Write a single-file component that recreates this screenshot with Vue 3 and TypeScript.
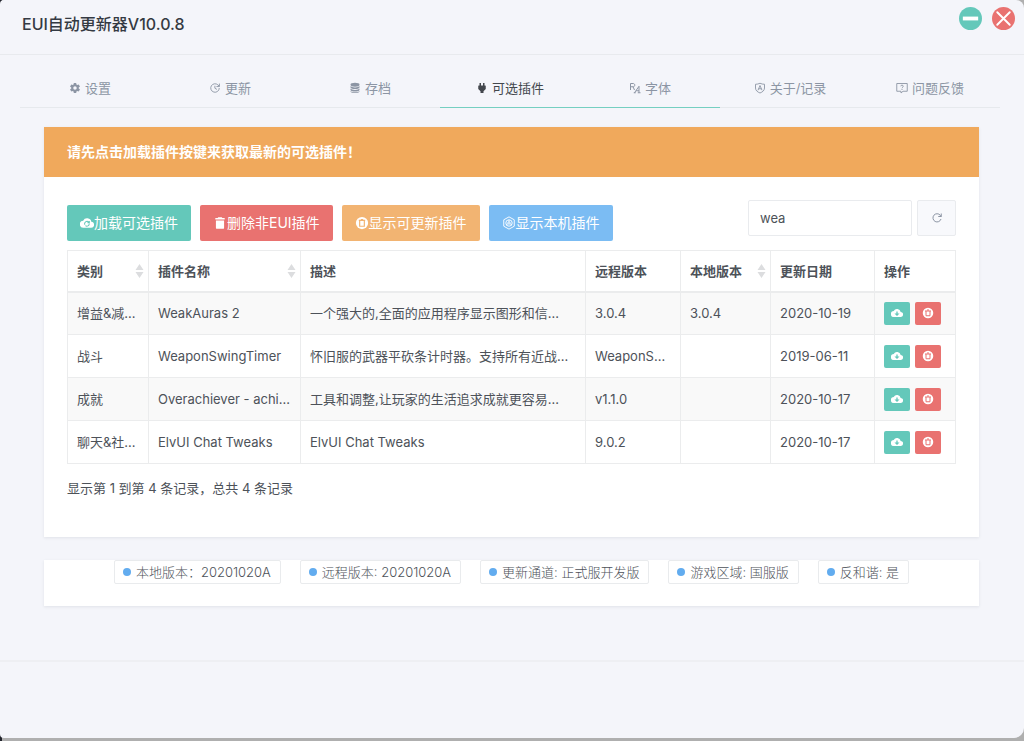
<script setup lang="ts">
import { ref } from 'vue'

interface Tab {
  icon: string
  label: string
}

interface Plugin {
  category: string
  name: string
  description: string
  remote: string
  local: string
  updated: string
}

const tabs: Tab[] = [
  { icon: 'gear', label: '设置' },
  { icon: 'update', label: '更新' },
  { icon: 'database', label: '存档' },
  { icon: 'plug', label: '可选插件' },
  { icon: 'font', label: '字体' },
  { icon: 'shield', label: '关于/记录' },
  { icon: 'question', label: '问题反馈' },
]
const activeTab = ref(3)
const hoverTab = ref(4)

const columns = [
  { label: '类别', key: 'category', sortable: true },
  { label: '插件名称', key: 'name', sortable: true },
  { label: '描述', key: 'description', sortable: false },
  { label: '远程版本', key: 'remote', sortable: false },
  { label: '本地版本', key: 'local', sortable: true },
  { label: '更新日期', key: 'updated', sortable: false },
  { label: '操作', key: 'actions', sortable: false },
]

const plugins: Plugin[] = [
  { category: '增益&减...', name: 'WeakAuras 2', description: '一个强大的,全面的应用程序显示图形和信...', remote: '3.0.4', local: '3.0.4', updated: '2020-10-19' },
  { category: '战斗', name: 'WeaponSwingTimer', description: '怀旧服的武器平砍条计时器。支持所有近战...', remote: 'WeaponS...', local: '', updated: '2019-06-11' },
  { category: '成就', name: 'Overachiever - achi...', description: '工具和调整,让玩家的生活追求成就更容易...', remote: 'v1.1.0', local: '', updated: '2020-10-17' },
  { category: '聊天&社...', name: 'ElvUI Chat Tweaks', description: 'ElvUI Chat Tweaks', remote: '9.0.2', local: '', updated: '2020-10-17' },
]

const statuses = ['本地版本：20201020A', '远程版本: 20201020A', '更新通道: 正式服开发版', '游戏区域: 国服版', '反和谐: 是']
const keyword = ref('wea')
</script>

<template>
  <div class="desktop">
    <div class="window">
      <header class="titlebar">
        <h1>EUI自动更新器V10.0.8</h1>
        <div class="controls">
          <button type="button" class="round teal" aria-label="最小化">
            <svg viewBox="0 0 24 24"><path d="M4 12H20" stroke="#fff" stroke-width="4" /></svg>
          </button>
          <button type="button" class="round red" aria-label="关闭">
            <svg viewBox="0 0 24 24"><path d="M5.500 5.500l13 13M18.500 5.500l-13 13" stroke="#fff" stroke-width="2" stroke-linecap="round" /></svg>
          </button>
        </div>
      </header>

      <nav class="tabs">
        <a
          v-for="(tab, i) in tabs"
          :key="tab.label"
          href="#"
          :class="{ active: i === activeTab, lined: i === activeTab || i === hoverTab }"
          @click.prevent="activeTab = i"
        >
          <svg v-if="tab.icon === 'gear'" viewBox="0 0 24 24" fill="currentColor"><path d="M12 15.500A3.500 3.500 0 0 1 8.500 12 3.500 3.500 0 0 1 12 8.500a3.500 3.500 0 0 1 3.500 3.500 3.500 3.500 0 0 1-3.500 3.500m7.430-2.530c.04-.32.07-.64.07-.97 0-.33-.03-.66-.07-1l2.110-1.630c.19-.15.24-.42.12-.64l-2-3.460c-.12-.22-.39-.31-.61-.22l-2.490 1c-.52-.39-1.060-.73-1.690-.98l-.37-2.650A.506.506 0 0 0 14 2h-4c-.25 0-.46.18-.5.42l-.37 2.650c-.63.25-1.170.59-1.690.98l-2.490-1c-.22-.09-.49 0-.61.22l-2 3.460c-.13.22-.07.49.12.64L4.570 11c-.04.34-.07.67-.07 1 0 .33.03.65.07.97l-2.110 1.660c-.19.15-.25.42-.12.64l2 3.460c.12.22.39.3.61.22l2.490-1.010c.52.4 1.060.74 1.690.99l.37 2.650c.04.24.25.42.5.42h4c.25 0 .46-.18.5-.42l.37-2.650c.63-.26 1.170-.59 1.690-.99l2.490 1.010c.22.08.49 0 .61-.22l2-3.460c.12-.22.07-.49-.12-.64z" /></svg>
          <svg v-else-if="tab.icon === 'update'" viewBox="0 0 24 24" fill="none" stroke="currentColor" stroke-width="1.800"><path d="M20.500 12a8.500 8.500 0 1 1-2.600-6.100L20.500 8.500M20.800 3.200v5.900h-5.900M11.800 7.500v5l4 2.300" /></svg>
          <svg v-else-if="tab.icon === 'database'" viewBox="0 0 24 24" fill="currentColor"><ellipse cx="12" cy="5.500" rx="9" ry="3.800" /><path d="M3 8.200c1.500 3.600 16.500 3.600 18 0v3c-1.500 4-16.500 4-18 0zM3 13.200c1.500 3.600 16.500 3.600 18 0v2.800c-1.500 4-16.500 4-18 0zM3 18c1.500 3.600 16.500 3.600 18 0v1c-1.500 4.300-16.500 4.300-18 0z" /></svg>
          <svg v-else-if="tab.icon === 'plug'" viewBox="0 0 24 24" fill="currentColor"><path d="M7 2h3v5h4V2h3v5h1.500a1 1 0 0 1 1 1v6L15 18.500V22H9v-3.500L4.500 14V8a1 1 0 0 1 1-1H7z" /></svg>
          <svg v-else-if="tab.icon === 'font'" viewBox="0 0 24 24" fill="none" stroke="currentColor" stroke-width="2"><path d="M3 16V3h5.500c4 0 4 6.500 0 6.500H3M8 9.500l3 6.500M11 21.500l9-13v13M14 17.500h6M9.500 21.500h4M17.500 21.500H23" /></svg>
          <svg v-else-if="tab.icon === 'shield'" viewBox="0 0 24 24" fill="none" stroke="currentColor" stroke-width="1.800"><path d="M12 2.500c3 1.500 6 2 9 2v7.500c0 5-4 8-9 10-5-2-9-5-9-10V4.500c3 0 6-.5 9-2zM8 16.500l4-9.500 4 9.500M9.300 13.500h5.400" /></svg>
          <svg v-else viewBox="0 0 24 24" fill="none" stroke="currentColor" stroke-width="1.800"><path d="M1.500 3h21v15.500H14L10 22v-3.500H1.500zM9.500 8.500c0-3 5-3 5 0 0 2-2.500 2-2.500 4M12 14v2" /></svg>
          <span>{{ tab.label }}</span>
        </a>
      </nav>

      <main>
        <section class="card">
          <p class="notice">请先点击加载插件按键来获取最新的可选插件！</p>
          <div class="content">
            <div class="toolbar">
              <div class="buttons">
                <button type="button" class="teal">
                  <svg viewBox="0 0 24 24"><path fill="#fff" d="M19.400 10A7.500 7.500 0 0 0 5.400 8 6 6 0 0 0 6 20h13a5 5 0 0 0 .4-10z" /><path fill="none" stroke="#64c8ba" stroke-width="1.800" d="M8.300 15a4 4 0 0 1 6.500-4.500l1 1M15.900 8.500v3.200h-3.200M15.800 13a4 4 0 0 1-6.500 3.500" /></svg>加载可选插件
                </button>
                <button type="button" class="red">
                  <svg viewBox="0 0 24 24" fill="#fff"><path d="M20 3.500h-4L15 2H9L8 3.500H4V6h16M5 7.500V20a2 2 0 0 0 2 2h10a2 2 0 0 0 2-2V7.500z" /></svg>删除非EUI插件
                </button>
                <button type="button" class="orange">
                  <svg viewBox="0 0 24 24"><circle cx="12" cy="12" r="10.500" fill="#fff" /><path fill="none" stroke="#f2b472" stroke-width="2" d="M6.500 7.500h11M8 8v9.500h8V8M10 6h4" /></svg>显示可更新插件
                </button>
                <button type="button" class="blue">
                  <svg viewBox="0 0 24 24" fill="none" stroke="#fff" stroke-width="1.600"><path d="M12 1.500l9 5v11l-9 5-9-5v-11z" /><circle cx="12" cy="12" r="5.500" /><circle cx="12" cy="12" r="2" /><path d="M12 10V6.500M10 13.500l-3 1.800M14 13.500l3 1.800" /></svg>显示本机插件
                </button>
              </div>
              <div class="search">
                <input v-model="keyword" type="text" aria-label="搜索" />
                <button type="button" aria-label="刷新">
                  <svg viewBox="0 0 24 24" fill="none" stroke="currentColor" stroke-width="2"><path d="M20 14a8.200 8.200 0 1 1-1.500-7.500L20.500 9M20.500 3v6h-6" /></svg>
                </button>
              </div>
            </div>

            <table>
              <colgroup>
                <col v-for="c in columns" :key="c.key" :class="'col-' + c.key" />
              </colgroup>
              <thead>
                <tr>
                  <th v-for="c in columns" :key="c.key" scope="col">
                    <div class="head">
                      {{ c.label }}
                      <svg v-if="c.sortable" viewBox="0 0 8 14" fill="#dcdddf"><path d="M4 0l4 6H0zM4 14l4-6H0z" /></svg>
                    </div>
                  </th>
                </tr>
              </thead>
              <tbody>
                <tr v-for="p in plugins" :key="p.name">
                  <td>{{ p.category }}</td>
                  <td>{{ p.name }}</td>
                  <td>{{ p.description }}</td>
                  <td>{{ p.remote }}</td>
                  <td>{{ p.local }}</td>
                  <td>{{ p.updated }}</td>
                  <td>
                    <div class="actions">
                      <button type="button" class="teal" aria-label="下载">
                        <svg viewBox="0 0 24 24"><path fill="#fff" d="M19.400 10A7.500 7.500 0 0 0 5.400 8 6 6 0 0 0 6 20h13a5 5 0 0 0 .4-10z" /><path fill="#64c8ba" d="M10.700 9h2.600v4H17l-5 5-5-5h3.700z" /></svg>
                      </button>
                      <button type="button" class="red" aria-label="删除">
                        <svg viewBox="0 0 24 24"><circle cx="12" cy="12" r="10.500" fill="#fff" /><path fill="none" stroke="#e97270" stroke-width="2" d="M6 8h12M8 8v9.500h8V8M10 6h4" /></svg>
                      </button>
                    </div>
                  </td>
                </tr>
              </tbody>
            </table>
            <p class="summary">显示第 1 到第 4 条记录，总共 4 条记录</p>
          </div>
        </section>

        <section class="card status">
          <span v-for="s in statuses" :key="s"><i></i>{{ s }}</span>
        </section>
      </main>
      <footer></footer>
    </div>
  </div>
</template>

<style>
html {
  background: #afafaf;
}
</style>

<style scoped>
* {
  box-sizing: border-box;
}
.desktop {
  display: flex;
  min-height: 100vh;
  padding-bottom: 3px;
  background: linear-gradient(90deg, #22242c 2px, #afafaf 2px);
  font: 13px/20px Inter, 'Noto Sans CJK SC', sans-serif;
  color: #4d5259;
}
.window {
  display: flex;
  flex: 1;
  flex-direction: column;
  min-width: 0;
  background: #f4f5fa;
  border-radius: 4px 8px 10px 4px;
}
h1,
p {
  margin: 0;
}
button {
  display: flex;
  align-items: center;
  justify-content: center;
  padding: 0;
  border: 0;
  border-radius: 2px;
  font: inherit;
  color: #fff;
  cursor: pointer;
}
svg {
  flex: none;
}
.teal {
  background: #64c8ba;
}
.red {
  background: #e97270;
}
.orange {
  background: #f2b472;
}
.blue {
  background: #7bbcf3;
}
.titlebar {
  display: flex;
  justify-content: space-between;
  height: 55px;
  padding: 7px 9px 0 22px;
  border-bottom: 1px solid #e8eaee;
}
h1 {
  padding-top: 6px;
  font-size: 16px;
  line-height: 22px;
  font-weight: 500;
  color: #343a43;
}
.controls {
  display: flex;
  gap: 10px;
}
.round {
  width: 23px;
  height: 23px;
  border-radius: 50%;
}
.round svg {
  width: 23px;
  height: 23px;
}
.tabs {
  display: flex;
  margin: 14px 24px 0 20px;
}
.tabs a {
  display: flex;
  flex: 1;
  align-items: center;
  justify-content: center;
  gap: 4px;
  height: 39px;
  border-bottom: 1px solid #e6e9ed;
  color: #8c95a4;
  text-decoration: none;
}
.tabs a.active {
  color: #43474d;
}
.tabs a.lined {
  border-bottom-color: #75cfc1;
}
.tabs svg {
  width: 12px;
  height: 12px;
}
main {
  display: flex;
  flex-direction: column;
  gap: 23px;
  margin: 19px 45px 0 44px;
}
.card {
  background: #fff;
  box-shadow: 0 1px 3px rgba(60, 70, 80, 0.1);
}
.notice {
  padding: 15px 23px;
  background: #f0a95c;
  font-size: 14px;
  font-weight: 600;
  color: #fff;
}
.content {
  padding: 23px 23px 39px;
}
.toolbar {
  display: flex;
  justify-content: space-between;
  gap: 16px;
  margin-bottom: 9px;
}
.buttons {
  display: flex;
  gap: 9px;
  margin-top: 5px;
}
.buttons button {
  height: 36px;
  padding: 0 13px;
  font-size: 14px;
  white-space: nowrap;
}
.buttons svg {
  width: 14px;
  height: 14px;
}
.search {
  display: flex;
  gap: 5px;
}
.search input {
  width: 164px;
  height: 36px;
  padding: 0 11px;
  border: 1px solid #e9ebee;
  border-radius: 2px;
  background: #fff;
  font: inherit;
  color: inherit;
}
.search button {
  width: 39px;
  height: 36px;
  border: 1px solid #e9ebee;
  background: #f8f9fc;
  color: #8c95a4;
}
.search svg {
  width: 12px;
  height: 12px;
}
table {
  width: 100%;
  table-layout: fixed;
  border-collapse: collapse;
}
.col-category {
  width: 81px;
}
.col-name {
  width: 152px;
}
.col-remote {
  width: 95px;
}
.col-local {
  width: 90px;
}
.col-updated {
  width: 104px;
}
.col-actions {
  width: 81px;
}
th,
td {
  padding: 0 4px 0 9px;
  border: 1px solid #ebeced;
  text-align: left;
  white-space: nowrap;
}
th {
  height: 41px;
  border-bottom-width: 2px;
  font-weight: 600;
}
td {
  height: 43px;
}
tbody tr:nth-child(odd) {
  background: #f9f9f9;
}
.head {
  display: flex;
  align-items: center;
  justify-content: space-between;
}
.head svg {
  width: 9px;
  height: 14px;
}
.actions {
  display: flex;
  gap: 5px;
}
.actions button {
  width: 26px;
  height: 23px;
}
.actions svg {
  width: 12px;
  height: 12px;
}
.summary {
  margin-top: 14px;
}
.status {
  display: flex;
  justify-content: center;
  gap: 19px;
  height: 46px;
}
.status span {
  display: flex;
  align-items: center;
  gap: 5px;
  height: 24px;
  padding: 0 9px 0 8px;
  border: 1px solid #e9ebed;
  border-radius: 2px;
  font-weight: 300;
  white-space: nowrap;
}
.status i {
  width: 8px;
  height: 8px;
  border-radius: 50%;
  background: #62acef;
}
footer {
  flex: 1;
  margin-top: 54px;
  border-top: 2px solid #eeeff3;
}
</style>
